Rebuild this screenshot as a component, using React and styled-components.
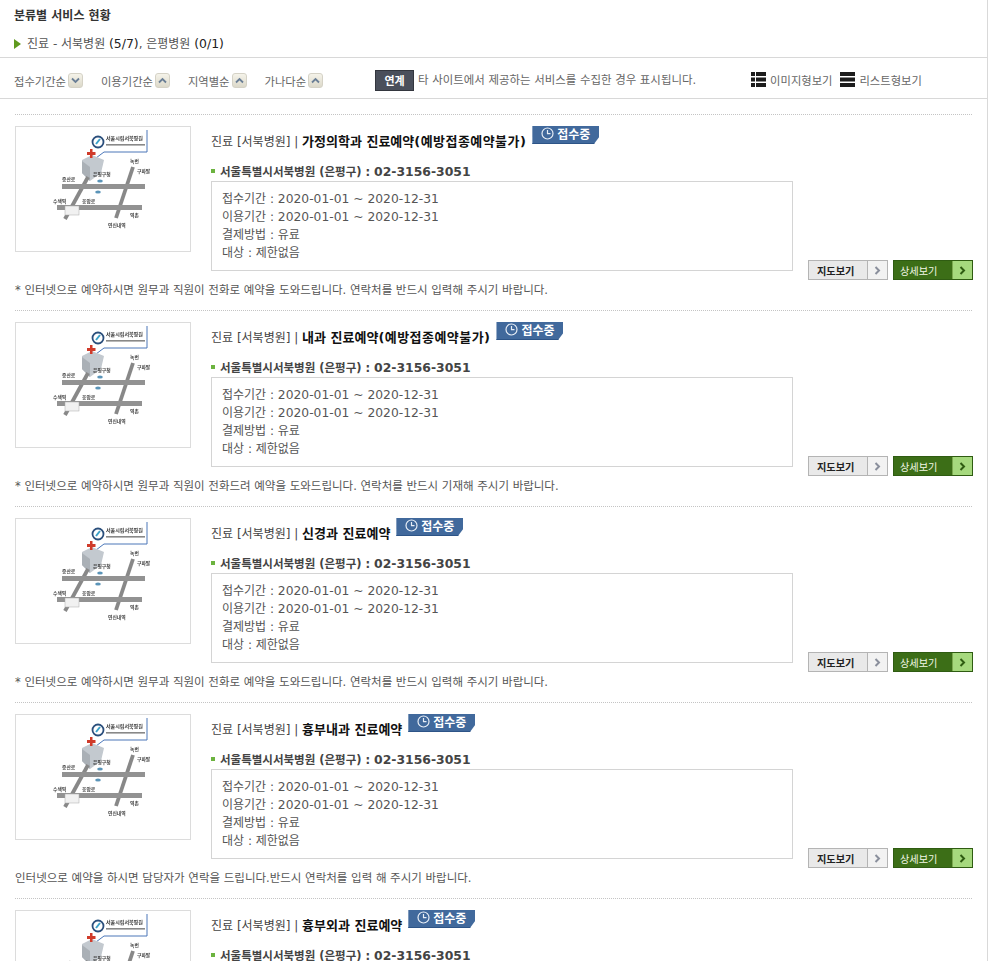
import React from "react";
import styled, { createGlobalStyle } from "styled-components";

const Global = createGlobalStyle`
  html, body { margin: 0; padding: 0; background: #fff; }
  body { font-family: "DejaVu Sans", "Noto Sans CJK KR", sans-serif; font-size: 12px; color: #555; }
`;
const Page = styled.div`
  width: 987px; height: 961px; overflow: hidden; border-right: 1px solid #d9d9d9; box-sizing: content-box;
`;
const Header = styled.header`
  height: 58px; padding: 7px 0 0 14px; box-sizing: border-box; border-bottom: 1px solid #d8d8d8;
`;
const Title = styled.h2`
  margin: 0; font-size: 12px; line-height: 18px; font-weight: 700; color: #333;
`;
const Summary = styled.p`
  margin: 10px 0 0; line-height: 18px; display: flex; align-items: center; gap: 6px; font-size: 12px; color: #555;
  b { font-weight: 400; color: #222; font-size: 12.4px; }
`;
const Arrow = styled.i`
  width: 0; height: 0; border-left: 7px solid #5f9a1e; border-top: 5px solid transparent; border-bottom: 5px solid transparent;
`;
const SortBar = styled.div`
  height: 41px; box-sizing: border-box; border-bottom: 1px solid #d8d8d8; display: flex; align-items: center; padding: 4px 0 0 14px;
`;
const SortItem = styled.span`
  display: flex; align-items: center; gap: 2px; margin: 1px 18px 0 0; font-size: 11.3px; color: #666; white-space: nowrap;
`;
const SortBtn = styled.span`
  width: 15px; height: 15px; box-sizing: border-box; border: 1px solid #d5d2c6; border-radius: 3px; background: linear-gradient(#f5f3ea, #dcd9ca); display: flex; align-items: center; justify-content: center;
`;
const LinkBadge = styled.span`
  margin-left: 34px; width: 39px; height: 21px; background: #4a4f5b; color: #fff; font-size: 11px; font-weight: 700; display: flex; align-items: center; justify-content: center; border: 1px solid #33363e; box-sizing: border-box;
`;
const LinkNote = styled.span`
  margin: -2px 0 0 4px; color: #666; font-size: 11.45px; white-space: nowrap; width: 333px;
`;
const ViewBtn = styled.span`
  display: flex; align-items: center; gap: 4px; margin: -1px 8px 0 0; color: #666; font-size: 11.3px; white-space: nowrap;
`;
const List = styled.main`
  padding: 15px 15px 0 15px;
`;
const Item = styled.article`
  height: 196px; box-sizing: border-box; border-top: 1px dotted #c4c4c4; padding-top: 11px;
`;
const Top = styled.div`
  display: flex; height: 154px;
`;
const Thumb = styled.div`
  width: 176px; height: 126px; box-sizing: border-box; border: 1px solid #dcdcdc; flex: none; margin-right: 20px;
  svg { display: block; }
`;
const Body = styled.div`
  width: 582px; flex: none; display: flex; flex-direction: column;
`;
const TitleRow = styled.div`
  height: 30px; flex: none; display: flex; align-items: flex-start; font-size: 12px; color: #444; white-space: nowrap;
`;
const TitleText = styled.span`
  margin-top: 8px; line-height: 16px;
  strong { font-size: 13px; color: #111; font-weight: 700; }
  em { font-style: normal; letter-spacing: .45px; }
`;
const Tag = styled.span`
  margin-left: 6px; width: 67px; height: 18px; padding-bottom: 3px; display: flex; align-items: center; gap: 3px; justify-content: center; background: #41699c; color: #fff; font-size: 12px; font-weight: 700; clip-path: polygon(0 0, 100% 0, 100% 60%, 92% 100%, 0 100%); border-bottom: 1px solid #2d5487; box-sizing: border-box;
`;
const Phone = styled.div`
  height: 25px; flex: none; box-sizing: border-box; padding-top: 5px; display: flex; align-items: center; gap: 5px; color: #444; font-weight: 700; font-size: 11.5px; white-space: nowrap;
  &::before { content: ""; width: 4px; height: 4px; background: #6cb33f; }
  b { font-size: 12.4px; }
`;
const Info = styled.div`
  height: 90px; flex: none; box-sizing: border-box; border: 1px solid #d4d4d4; padding: 8px 10px 0; font-size: 12px; line-height: 18px; color: #555; white-space: nowrap;
  b { font-weight: 400; font-size: 12.3px; }
`;
const Buttons = styled.div`
  margin-left: 15px; align-self: flex-end; display: flex; gap: 5px; flex: none;
`;
const Btn = styled.span`
  width: 80px; height: 20px; box-sizing: border-box; display: flex; border: 1px solid ${p => p.$green ? "#2f5c12" : "#b4b4b4"}; background: ${p => p.$green ? "#3c6e17" : "#e9e9e9"}; color: ${p => p.$green ? "#f2f7e6" : "#222"}; font-size: 10.2px; font-weight: ${p => p.$green ? 400 : 700};
  white-space: nowrap;
  em { font-style: normal; flex: 1; display: flex; align-items: center; padding-left: ${p => p.$green ? 6 : 8}px; }
  i { width: 19px; flex: none; font-style: normal; display: flex; align-items: center; justify-content: center; border-left: 1px solid ${p => p.$green ? "#7ba850" : "#b4b4b4"}; background: ${p => p.$green ? "#a6d97e" : "#f2f2f2"}; }
`;
const Note = styled.p`
  margin: 1px 0 0; font-size: 11.5px; line-height: 18px; color: #555; white-space: nowrap;
`;

const Chevron = ({ down }) => (
  <svg width="9" height="7" viewBox="0 0 9 7"><path d={down ? "M1 1.5 4.5 5 8 1.5" : "M1 5.5 4.5 2 8 5.5"} fill="none" stroke="#6b7f96" strokeWidth="1.8" /></svg>
);
const GridIcon = () => (
  <svg width="15" height="15" viewBox="0 0 15 15" fill="#1c1c1c"><rect x="0" y="0" width="4" height="4" /><rect x="5" y="0" width="10" height="4" /><rect x="0" y="5.5" width="4" height="4" /><rect x="5" y="5.5" width="10" height="4" /><rect x="0" y="11" width="4" height="4" /><rect x="5" y="11" width="10" height="4" /></svg>
);
const ListIcon = () => (
  <svg width="15" height="15" viewBox="0 0 15 15" fill="#1c1c1c"><rect width="15" height="4" /><rect y="5.5" width="15" height="4" /><rect y="11" width="15" height="4" /></svg>
);
const Clock = () => (
  <svg width="13" height="13" viewBox="0 0 13 13" fill="none" stroke="#e8eef6" strokeWidth="1.2"><circle cx="6.5" cy="6.5" r="5.5" /><path d="M6.5 3v3.7H9.5" /></svg>
);
const Caret = ({ color }) => (
  <svg width="7" height="9" viewBox="0 0 7 9"><path d="M1.5 1 5 4.5 1.5 8" fill="none" stroke={color} strokeWidth="2" /></svg>
);
const MapArt = ({ id }) => (
  <svg width="174" height="124" viewBox="0 0 174 124">
    <defs><filter id={id}><feGaussianBlur stdDeviation="0.45" /></filter></defs>
    <g filter={`url(#${id})`}>
      <path d="M131 3V25H88L80 31" fill="none" stroke="#4a76b8" strokeWidth="1" />
      <circle cx="82" cy="15" r="5.5" fill="#fff" stroke="#2c4f7c" strokeWidth="1.8" />
      <path d="M80 17 84 12" stroke="#3aa0c8" strokeWidth="2" />
      <text x="90" y="13" fontSize="5" fontWeight="700" fill="#333">서울시립서북병원</text>
      <rect x="90" y="17" width="39" height="1.6" fill="#888" />
      <path d="M66 33 76 28 88 33 85 46 74 54 66 46Z" fill="#c3c9cf" />
      <path d="M66 34 74 40 74 54 66 46Z" fill="#aab0b6" />
      <path d="M71 25h3v-3h2.500v3h3v3h-3v3h-2.500v-3h-3z" fill="#d03a2a" />
      <path d="M117 40 100 91" stroke="#888" strokeWidth="3.800" />
      <path d="M72 50 49 92" stroke="#888" strokeWidth="3.800" />
      <rect x="46" y="57" width="83" height="5" fill="#929292" />
      <rect x="41" y="78" width="85" height="5" fill="#929292" />
      <ellipse cx="84" cy="54" rx="2.800" ry="1.500" fill="#5a94b8" />
      <ellipse cx="82" cy="65" rx="2.800" ry="1.500" fill="#5a94b8" />
      <rect x="49" y="79" width="14" height="9" fill="#f1f1f1" stroke="#aaa" strokeWidth=".5" />
      <g fontSize="4.800" fontWeight="700" fill="#444">
        <text x="46" y="54">증산로</text><text x="37" y="76">수색역</text><text x="114" y="36">녹번</text>
        <text x="121" y="46">구파발</text><text x="77" y="49">은평구청</text><text x="66" y="76">응암로</text>
        <text x="114" y="90">역촌</text><text x="92" y="100">연신내역</text>
      </g>
    </g>
  </svg>
);

const notes = {
  a: "* 인터넷으로 예약하시면 원무과 직원이 전화로 예약을 도와드립니다. 연락처를 반드시 입력해 주시기 바랍니다.",
  b: "* 인터넷으로 예약하시면 원무과 직원이 전화드려 예약을 도와드립니다. 연락처를 반드시 기재해 주시기 바랍니다.",
  c: "인터넷으로 예약을 하시면 담당자가 연락을 드립니다.반드시 연락처를 입력 해 주시기 바랍니다.",
};
const items = [
  { name: "가정의학과 진료예약", extra: "(예방접종예약불가)", note: notes.a },
  { name: "내과 진료예약", extra: "(예방접종예약불가)", note: notes.b },
  { name: "신경과 진료예약", note: notes.a },
  { name: "흉부내과 진료예약", note: notes.c },
  { name: "흉부외과 진료예약", note: notes.a },
];

export default function App() {
  return (
    <Page>
      <Global />
      <Header>
        <Title>분류별 서비스 현황</Title>
        <Summary><Arrow /><span>진료 - 서북병원 <b>(5/7)</b>, 은평병원 <b>(0/1)</b></span></Summary>
      </Header>
      <SortBar>
        <SortItem>접수기간순<SortBtn><Chevron down /></SortBtn></SortItem>
        <SortItem>이용기간순<SortBtn><Chevron /></SortBtn></SortItem>
        <SortItem>지역별순<SortBtn><Chevron /></SortBtn></SortItem>
        <SortItem>가나다순<SortBtn><Chevron /></SortBtn></SortItem>
        <LinkBadge>연계</LinkBadge>
        <LinkNote>타 사이트에서 제공하는 서비스를 수집한 경우 표시됩니다.</LinkNote>
        <ViewBtn><GridIcon />이미지형보기</ViewBtn>
        <ViewBtn><ListIcon />리스트형보기</ViewBtn>
      </SortBar>
      <List>
        {items.map((it, i) => (
          <Item key={it.name}>
            <Top>
              <Thumb><MapArt id={`soft${i}`} /></Thumb>
              <Body>
                <TitleRow>
                  <TitleText>진료 [서북병원] | <strong>{it.name}{it.extra && <em>{it.extra}</em>}</strong></TitleText>
                  <Tag><Clock />접수중</Tag>
                </TitleRow>
                <Phone><span>서울특별시서북병원 (은평구) : <b>02-3156-3051</b></span></Phone>
                <Info>
                  <div>접수기간 : <b>2020-01-01 ~ 2020-12-31</b></div>
                  <div>이용기간 : <b>2020-01-01 ~ 2020-12-31</b></div>
                  <div>결제방법 : 유료</div>
                  <div>대상 : 제한없음</div>
                </Info>
              </Body>
              <Buttons>
                <Btn><em>지도보기</em><i><Caret color="#8a8f9c" /></i></Btn>
                <Btn $green><em>상세보기</em><i><Caret color="#2f5c12" /></i></Btn>
              </Buttons>
            </Top>
            <Note>{it.note}</Note>
          </Item>
        ))}
      </List>
    </Page>
  );
}
